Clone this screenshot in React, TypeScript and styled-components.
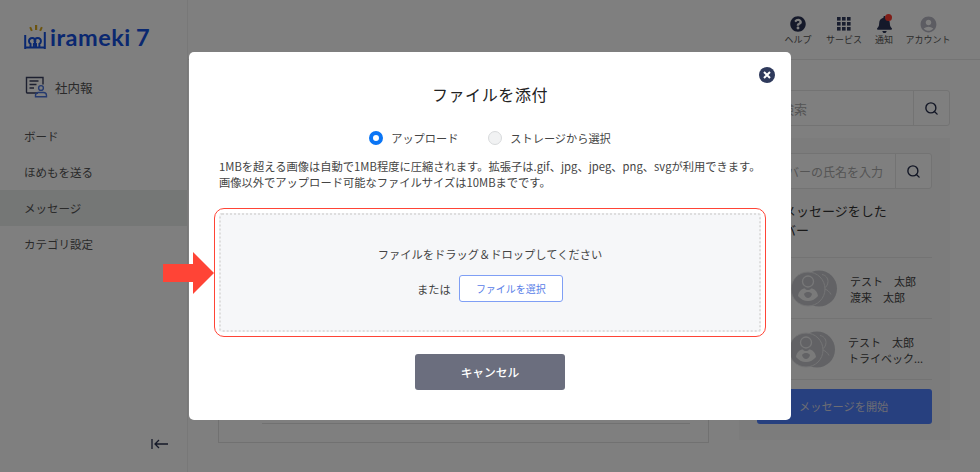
import React from "react";
import styled, { createGlobalStyle } from "styled-components";
import { Search } from "lucide-react";
import { FaBell, FaQuestionCircle } from "react-icons/fa";
import { MdAccountCircle } from "react-icons/md";

const Global = createGlobalStyle`
  html, body { margin: 0; padding: 0; background: #fff; }
  * { box-sizing: border-box; }
  body { font-family: "Noto Sans CJK JP", "Noto Sans", sans-serif; color: #444; }
`;
const Page = styled.div`display: flex; width: 980px; height: 472px; overflow: hidden; background: #fff;`;
const Sidebar = styled.aside`
  width: 188px; flex: none; border-right: 1px solid #f0f0f0; display: flex; flex-direction: column; padding-top: 22px;
`;
const Logo = styled.div`display: flex; align-items: flex-end; height: 28px; margin-left: 24px;`;
const LogoText = styled.span`
  font-family: Lato, sans-serif; font-size: 23.5px; line-height: 26px; font-weight: 700; letter-spacing: 0.5px; word-spacing: -1px; color: #1450e0; margin-left: 2px; white-space: pre;
`;
const SectionHead = styled.div`display: flex; align-items: center; gap: 7px; margin: 23px 0 0 25px; height: 28px; font-size: 12.5px; color: #555;`;
const NavList = styled.nav`display: flex; flex-direction: column; margin-top: 17px;`;
const NavItem = styled.div<{ $active?: boolean }>`
  height: 36px; display: flex; align-items: center; padding-left: 24px; font-size: 11.5px; color: #555;
  background: ${(p) => (p.$active ? "#ebeeed" : "transparent")};
`;
const Collapse = styled.div`margin-top: auto; padding: 0 0 22px 151px; display: flex; color: #2a3250;`;
const Main = styled.main`flex: 1; min-width: 0; display: flex; flex-direction: column;`;
const Header = styled.header`
  height: 60px; flex: none; border-bottom: 1px solid #e8e8e8; display: flex; justify-content: flex-end; padding: 14px 28px 0 0; gap: 10px;
`;
const HeadItem = styled.div<{ $w: number }>`
  width: ${(p) => p.$w}px; display: flex; flex-direction: column; align-items: center; color: #333c5e;
  svg { display: block; }
`;
const IconBox = styled.div`height: 20px; display: flex; align-items: center; justify-content: center; position: relative;`;
const Dot = styled.span`position: absolute; right: 1px; top: 0; width: 7px; height: 7px; border-radius: 50%; background: #ff3b30;`;
const HeadLabel = styled.span`font-size: 9px; line-height: 14px; margin-top: -1px; color: #555; white-space: nowrap;`;
const Body = styled.div`flex: 1; display: flex; padding: 30px 30px 29px 30px; gap: 30px; min-height: 0;`;
const Center = styled.section`flex: 1; display: flex; flex-direction: column; justify-content: flex-end; min-width: 0;`;
const Card = styled.div`height: 100px; border: 1px solid #e2e2e2; display: flex; justify-content: flex-end; padding: 0 18px 0 43px;`;
const CardInner = styled.div`flex: 1; height: 80px; border-bottom: 1px solid #e2e2e2;`;
const Right = styled.section`width: 211px; flex: none; display: flex; flex-direction: column; gap: 12px; margin-bottom: 3px;`;
const SearchBox = styled.div`height: 36px; flex: none; display: flex; border: 1px solid #e6e6e6; border-radius: 3px; background: #fff;`;
const SearchField = styled.div<{ $size: number; $pad: number }>`
  flex: 1; display: flex; align-items: center; padding-left: ${(p) => p.$pad}px; font-size: ${(p) => p.$size}px; color: #aaa; white-space: nowrap;
`;
const SearchBtn = styled.div`
  width: 36px; flex: none; display: flex; align-items: center; justify-content: center; border-left: 1px solid #e6e6e6; color: #242c4a;
`;
const Panel = styled.div`flex: 1; background: #f9f9f9; padding: 15px 18px 16px 18px; display: flex; flex-direction: column;`;
const PanelTitle = styled.div`font-size: 13px; line-height: 19px; margin: 12px 0 18px; color: #333; letter-spacing: 0; white-space: nowrap;`;
const Member = styled.div<{ $shift: number }>`
  height: 61px; border-top: 1px solid #e6e6e6; display: flex; align-items: center; gap: 12px; padding: 0 0 0 ${(p) => 34 - p.$shift}px;
`;
const Names = styled.div`font-size: 11px; line-height: 16px; color: #444; white-space: pre; margin-top: 1px;`;
const StartBtn = styled.div`
  height: 35px; flex: none; margin-top: 9px; border-radius: 3px; background: #4e80fe; color: #d8d8e8; font-size: 11.2px; padding-bottom: 1px;
  display: flex; align-items: center; padding-left: 42px;
`;
const Divider = styled.div`border-top: 1px solid #e6e6e6;`;
const Overlay = styled.div`
  position: fixed; inset: 0; background: rgba(0, 0, 0, 0.5); display: flex; justify-content: center; align-items: flex-start; padding-top: 52px;
`;
const Modal = styled.div`
  position: relative; width: 602px; height: 368px; background: #fff; border-radius: 5px; padding: 29px 25px 0; display: flex; flex-direction: column; align-items: stretch;
`;
const Close = styled.button`
  position: absolute; right: 16px; top: 15px; width: 16px; height: 16px; padding: 0; border: 0; background: none; display: block;
  svg { display: block; }
`;
const Title = styled.h2`margin: 0; text-align: center; font-size: 16px; line-height: 26px; font-weight: 400; letter-spacing: 0.6px; color: #222;`;
const RadioRow = styled.div`display: flex; justify-content: center; gap: 30px; margin-top: 20px; height: 22px; align-items: center;`;
const RadioOption = styled.label`display: flex; align-items: center; gap: 8px; font-size: 11.2px; color: #444;`;
const RadioDot = styled.span<{ $on?: boolean }>`
  width: 14px; height: 14px; border-radius: 50%;
  ${(p) => (p.$on ? "background: #fff; border: 4px solid #0a75f5;" : "background: #f1f2f3; border: 1px solid #d8dadc;")}
`;
const Desc = styled.p`margin: 9px 0 0 5px; font-size: 11.27px; line-height: 16px; color: #444; white-space: nowrap;`;
const Highlight = styled.div`margin-top: 18px; height: 129px; border: 1px solid #ff4436; border-radius: 10px; padding: 4px;`;
const Drop = styled.div`
  height: 119px; background: #f6f7f9; border: 2px dotted #dedede; border-radius: 3px; display: flex; flex-direction: column; align-items: center; padding-top: 30px;
`;
const DropText = styled.div`font-size: 11.25px; line-height: 18px; color: #444;`;
const OrRow = styled.div`display: flex; align-items: center; gap: 8px; margin-top: 12px; font-size: 11.25px; color: #444;`;
const SelectBtn = styled.button`
  width: 104px; height: 27px; padding: 0; background: #fff; border: 1px solid #7f9ff5; border-radius: 3px; color: #5a80e8; font: inherit; font-size: 10px;
`;
const Cancel = styled.button`
  display: block; width: 150px; height: 36px; margin: 17px auto 0; padding: 0 0 2px; border: 0; border-radius: 3px; background: #6b6e7e; color: #fff; font: inherit; font-size: 11.75px; font-weight: 500;
`;
const Arrow = styled.svg`position: absolute; left: -26px; top: 200px;`;

const LogoMark = () => (
  <svg width="24" height="26" viewBox="0 0 24 26">
    <g fill="#d9a81e">
      <rect x="6" y="3" width="2" height="4" transform="rotate(-25 7 5)" />
      <rect x="11" y="1" width="2.2" height="5" />
      <rect x="16" y="3" width="2" height="4" transform="rotate(25 17 5)" />
    </g>
    <g fill="none" stroke="#1450e0" strokeWidth="2">
      <path d="M1.2 11v14M20.8 8v17M1.2 23.4h19.6" />
      <path d="M6.5 23v-3.2a3.2 3.2 0 1 1 3.4 0V23M12 23v-3.2a3.2 3.2 0 1 1 3.4 0V23" />
    </g>
  </svg>
);
const ReportIcon = () => (
  <svg width="23" height="22" viewBox="0 0 23 22" fill="none">
    <path d="M13 17H2.5a1 1 0 0 1-1-1V1.5h16.5v7" stroke="#3a4060" strokeWidth="1.4" />
    <path d="M4.5 5h9M4.5 8.5h7M4.5 12h4.5" stroke="#3a4060" strokeWidth="1.3" />
    <circle cx="16" cy="12" r="2.4" stroke="#4a74dc" strokeWidth="1.4" />
    <path d="M10.5 20.8v-1.3a3 3 0 0 1 3-3h5a3 3 0 0 1 3 3v1.3z" stroke="#4a74dc" strokeWidth="1.4" />
  </svg>
);
const GridIcon = () => (
  <svg width="14" height="14" viewBox="0 0 14 14" fill="#333c5e">
    {[0, 5, 10].flatMap((y) => [0, 5, 10].map((x) => <rect key={`${x}-${y}`} x={x} y={y} width="3.6" height="3.6" />))}
  </svg>
);
const Pair = () => (
  <svg width="47" height="37" viewBox="0 0 47 37">
    <circle cx="28" cy="18.5" r="18" fill="#c4c5ca" />
    <path d="M31 4.5c3.5.5 6 3.5 6 7s-2 6-4.5 7c3.5 1 6 3 7.5 6" fill="none" stroke="#e8e8ea" strokeWidth="1" />
    <circle cx="17" cy="19" r="17" fill="#c4c5ca" stroke="#e8e8ea" strokeWidth="1" />
    <circle cx="17" cy="11.5" r="5.5" fill="none" stroke="#eeeef0" strokeWidth="1.3" />
    <path d="M7 26c.6-5 4-7.5 7-7.5 1 2 5 2 6 0 3 0 6.4 2.5 7 7.5-2.5 3-6 5-10 5s-7.5-2-10-5z" fill="#f4f4f5" />
    <path d="M13 24c1-1.5 2.5-2 4-2s3 .5 4 2c-.6 2.5-2.4 4-4 4s-3.4-1.5-4-4z" fill="#c4c5ca" />
  </svg>
);

export default function App() {
  return (
    <>
      <Global />
      <Page>
        <Sidebar>
          <Logo>
            <LogoMark />
            <LogoText>irameki 7</LogoText>
          </Logo>
          <SectionHead>
            <ReportIcon />
            社内報
          </SectionHead>
          <NavList>
            <NavItem>ボード</NavItem>
            <NavItem>ほめもを送る</NavItem>
            <NavItem $active>メッセージ</NavItem>
            <NavItem>カテゴリ設定</NavItem>
          </NavList>
          <Collapse>
            <svg width="18" height="12" viewBox="0 0 18 12" fill="none" stroke="currentColor" strokeWidth="1.3">
              <path d="M1 1v10M17 6H4M8 2 4 6l4 4" />
            </svg>
          </Collapse>
        </Sidebar>
        <Main>
          <Header>
            <HeadItem $w={32}>
              <IconBox><FaQuestionCircle size={16} color="#2a3355" /></IconBox>
              <HeadLabel>ヘルプ</HeadLabel>
            </HeadItem>
            <HeadItem $w={40}>
              <IconBox><GridIcon /></IconBox>
              <HeadLabel>サービス</HeadLabel>
            </HeadItem>
            <HeadItem $w={20}>
              <IconBox><FaBell size={17} color="#2a3355" /><Dot /></IconBox>
              <HeadLabel>通知</HeadLabel>
            </HeadItem>
            <HeadItem $w={48}>
              <IconBox><MdAccountCircle size={19} color="#b8b8c4" /></IconBox>
              <HeadLabel>アカウント</HeadLabel>
            </HeadItem>
          </Header>
          <Body>
            <Center>
              <Card><CardInner /></Card>
            </Center>
            <Right>
              <SearchBox>
                <SearchField $size={13} $pad={15}>記事検索</SearchField>
                <SearchBtn><Search size={15} strokeWidth={2.2} /></SearchBtn>
              </SearchBox>
              <Panel>
                <SearchBox>
                  <SearchField $size={12} $pad={5}>メンバーの氏名を入力</SearchField>
                  <SearchBtn><Search size={15} strokeWidth={2.2} /></SearchBtn>
                </SearchBox>
                <PanelTitle>最近メッセージをした<br />メンバー</PanelTitle>
                <Member $shift={0}>
                  <Pair />
                  <Names>{"テスト　太郎\n渡来　太郎"}</Names>
                </Member>
                <Member $shift={2}>
                  <Pair />
                  <Names>{"テスト　太郎\nトライベック..."}</Names>
                </Member>
                <Divider />
                <StartBtn>メッセージを開始</StartBtn>
              </Panel>
            </Right>
          </Body>
        </Main>
      </Page>
      <Overlay>
        <Modal>
          <Close>
            <svg width="16" height="16" viewBox="0 0 16 16">
              <circle cx="8" cy="8" r="8" fill="#2f3a5c" />
              <path d="M5 5l6 6M11 5l-6 6" stroke="#fff" strokeWidth="2" />
            </svg>
          </Close>
          <Title>ファイルを添付</Title>
          <RadioRow>
            <RadioOption><RadioDot $on />アップロード</RadioOption>
            <RadioOption><RadioDot />ストレージから選択</RadioOption>
          </RadioRow>
          <Desc>
            1MBを超える画像は自動で1MB程度に圧縮されます。拡張子は.gif、jpg、jpeg、png、svgが利用できます。
            <br />
            画像以外でアップロード可能なファイルサイズは10MBまでです。
          </Desc>
          <Highlight>
            <Drop>
              <DropText>ファイルをドラッグ＆ドロップしてください</DropText>
              <OrRow>
                または
                <SelectBtn>ファイルを選択</SelectBtn>
              </OrRow>
            </Drop>
          </Highlight>
          <Cancel>キャンセル</Cancel>
          <Arrow width="51" height="42" viewBox="0 0 51 42">
            <path d="M0 12h30V0l21 21-21 21V30H0z" fill="#ff4436" />
          </Arrow>
        </Modal>
      </Overlay>
    </>
  );
}
